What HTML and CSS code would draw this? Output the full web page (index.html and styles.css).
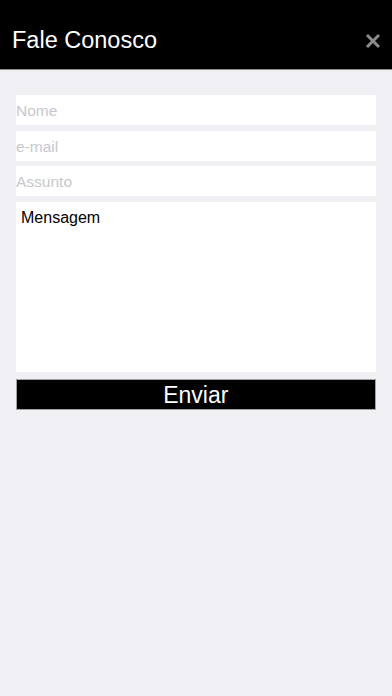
FILE: index.html
```html
<!DOCTYPE html>
<html lang="pt">
<head>
<meta charset="utf-8">
<title>Fale Conosco</title>
<link rel="stylesheet" href="styles.css">
</head>
<body>
<header class="topbar">
  <h1 class="title">Fale Conosco</h1>
  <button class="close" aria-label="Fechar">
    <svg width="16" height="16" viewBox="0 0 16 16"><path d="M2 2 L14 14 M14 2 L2 14" stroke="#8c8c8c" stroke-width="3" stroke-linecap="butt"/></svg>
  </button>
</header>
<main class="form">
  <input class="field" type="text" placeholder="Nome">
  <input class="field" type="email" placeholder="e-mail">
  <input class="field field-tight" type="text" placeholder="Assunto">
  <textarea class="message">Mensagem</textarea>
  <button class="send">Enviar</button>
</main>
</body>
</html>
```

FILE: styles.css
```css
html, body {
  margin: 0;
  padding: 0;
  background: #efeff4;
  font-family: "Liberation Sans", Arial, sans-serif;
}
.topbar {
  height: 70px;
  background: #000;
  border-bottom: 1px solid #8a8a8a;
  display: flex;
  align-items: center;
  justify-content: space-between;
  padding: 12px 11px 0 12px;
  box-sizing: border-box;
}
.title {
  margin: 0;
  color: #fff;
  font-weight: normal;
  font-size: 23.5px;
  line-height: 1;
}
.close {
  background: none;
  border: 0;
  padding: 0;
  width: 16px;
  height: 16px;
  display: flex;
}
.form {
  display: flex;
  flex-direction: column;
  gap: 6px;
  padding: 25px 16px 0 16px;
}
.field {
  height: 30px;
  border: 0;
  margin: 0;
  padding: 2px 0 0 0;
  background: #fff;
  font-family: "Liberation Sans", Arial, sans-serif;
  font-size: 15.5px;
  color: #000;
  outline: none;
  box-sizing: border-box;
}
.field-tight {
  margin-top: -1px;
}
.field::placeholder {
  color: #c7c7cd;
  opacity: 1;
}
.message {
  height: 170px;
  border: 0;
  margin: 0;
  padding: 6px 5px;
  background: #fff;
  font-family: "Liberation Sans", Arial, sans-serif;
  font-size: 16px;
  line-height: 19px;
  color: #000;
  resize: none;
  outline: none;
  box-sizing: border-box;
}
.send {
  height: 31px;
  margin: 1px 0 0 -0.5px;
  padding: 2px 0 0 0;
  background: #000;
  border: 1px solid #a0a0a0;
  color: #fff;
  font-family: "Liberation Sans", Arial, sans-serif;
  font-size: 23px;
  line-height: 1;
  box-sizing: border-box;
}
```
